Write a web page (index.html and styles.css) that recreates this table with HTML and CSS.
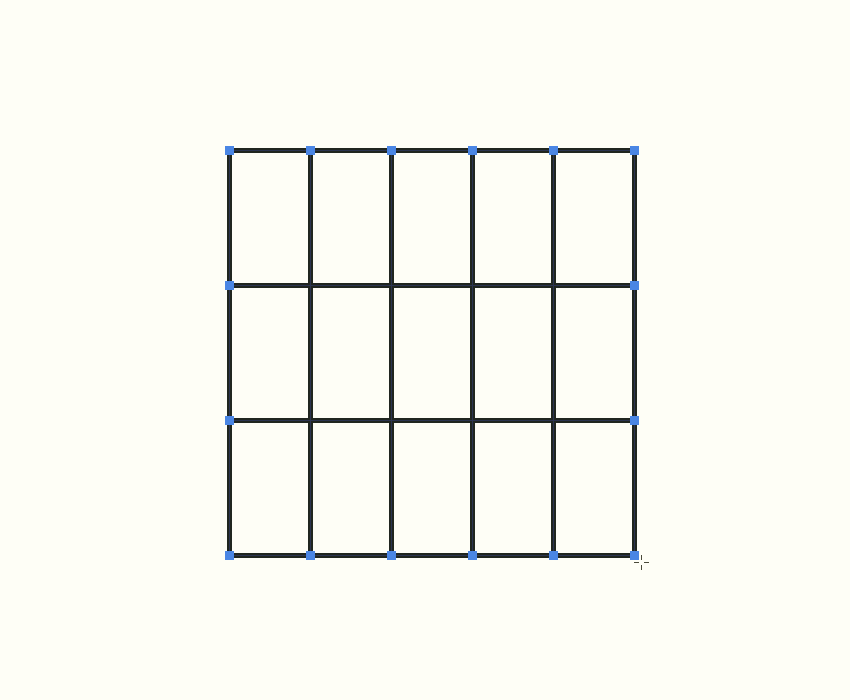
FILE: index.html
```html
<!DOCTYPE html>
<html>
<head>
<meta charset="utf-8">
<link rel="stylesheet" href="styles.css">
</head>
<body>
<main class="stage">
  <svg class="board" width="440" height="440" viewBox="0 0 440 440">
    <g class="lines">
      <line x1="9.5" y1="9.5" x2="414.5" y2="9.5"/>
      <line x1="9.5" y1="144.5" x2="414.5" y2="144.5"/>
      <line x1="9.5" y1="279.5" x2="414.5" y2="279.5"/>
      <line x1="9.5" y1="414.5" x2="414.5" y2="414.5"/>
      <line x1="9.5" y1="9.5" x2="9.5" y2="414.5"/>
      <line x1="90.5" y1="9.5" x2="90.5" y2="414.5"/>
      <line x1="171.5" y1="9.5" x2="171.5" y2="414.5"/>
      <line x1="252.5" y1="9.5" x2="252.5" y2="414.5"/>
      <line x1="333.5" y1="9.5" x2="333.5" y2="414.5"/>
      <line x1="414.5" y1="9.5" x2="414.5" y2="414.5"/>
    </g>
    <g class="inner">
      <line x1="9.5" y1="9.5" x2="414.5" y2="9.5"/>
      <line x1="9.5" y1="144.5" x2="414.5" y2="144.5"/>
      <line x1="9.5" y1="279.5" x2="414.5" y2="279.5"/>
      <line x1="9.5" y1="414.5" x2="414.5" y2="414.5"/>
      <line x1="9.5" y1="9.5" x2="9.5" y2="414.5"/>
      <line x1="90.5" y1="9.5" x2="90.5" y2="414.5"/>
      <line x1="171.5" y1="9.5" x2="171.5" y2="414.5"/>
      <line x1="252.5" y1="9.5" x2="252.5" y2="414.5"/>
      <line x1="333.5" y1="9.5" x2="333.5" y2="414.5"/>
      <line x1="414.5" y1="9.5" x2="414.5" y2="414.5"/>
    </g>
    <g class="handles">
      <rect x="5" y="5" width="9" height="9"/>
      <rect x="86" y="5" width="9" height="9"/>
      <rect x="167" y="5" width="9" height="9"/>
      <rect x="248" y="5" width="9" height="9"/>
      <rect x="329" y="5" width="9" height="9"/>
      <rect x="410" y="5" width="9" height="9"/>
      <rect x="5" y="140" width="9" height="9"/>
      <rect x="410" y="140" width="9" height="9"/>
      <rect x="5" y="275" width="9" height="9"/>
      <rect x="410" y="275" width="9" height="9"/>
      <rect x="5" y="410" width="9" height="9"/>
      <rect x="86" y="410" width="9" height="9"/>
      <rect x="167" y="410" width="9" height="9"/>
      <rect x="248" y="410" width="9" height="9"/>
      <rect x="329" y="410" width="9" height="9"/>
      <rect x="410" y="410" width="9" height="9"/>
    </g>
    <g class="cursor">
      <line x1="421.5" y1="414" x2="421.5" y2="419"/>
      <line x1="421.5" y1="424" x2="421.5" y2="429"/>
      <line x1="414" y1="421.5" x2="419" y2="421.5"/>
      <line x1="424" y1="421.5" x2="429" y2="421.5"/>
    </g>
  </svg>
</main>
</body>
</html>
```

FILE: styles.css
```css
html, body {
  margin: 0;
  padding: 0;
  background: #fefef6;
}
.stage {
  width: 850px;
  height: 700px;
  padding: 141px 0 0 220px;
  box-sizing: border-box;
}
.board {
  display: block;
}
.lines line {
  stroke: #20261f;
  stroke-width: 5;
  stroke-linecap: square;
}
.inner line {
  stroke: #2b3450;
  stroke-width: 1;
}
.handles rect {
  fill: #4a86e4;
}
.cursor line {
  stroke: #4a4a3a;
  stroke-width: 1;
}
```
